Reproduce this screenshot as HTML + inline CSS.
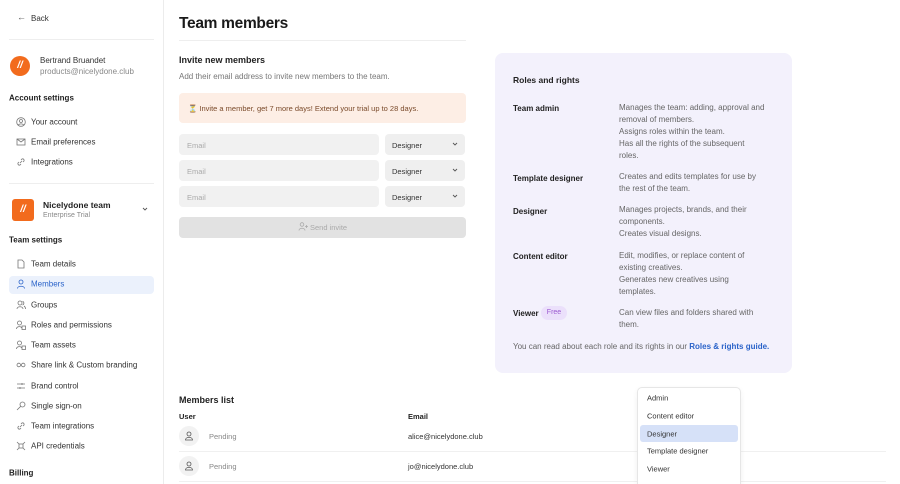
<!DOCTYPE html>
<html><head><style>
*{margin:0;padding:0;box-sizing:border-box}
html,body{width:900px;height:484px;overflow:hidden}
body{background:#fff;font-family:"Liberation Sans",sans-serif;color:#222;position:relative;font-size:8px}
.a{position:absolute;white-space:nowrap}
.side{position:absolute;left:0;top:0;width:164px;height:484px;border-right:1px solid #ececec}
.it{position:absolute;left:31px;font-size:8px;color:#333;transform:translateY(-50%)}
.ic{position:absolute;left:16px;width:10px;height:10px;transform:translateY(-50%)}
.h{font-weight:bold;font-size:8px;color:#222;transform:translateY(-50%)}
.inp{position:absolute;background:#f1f1f1;border-radius:4px;height:21px;font-size:7.5px;color:#aaa;padding:7px 8px}
.sel{position:absolute;background:#efefef;border-radius:4px;height:21px;font-size:7.5px;color:#333;padding:7px 7px;width:80px;left:385px}
.sel svg{position:absolute;right:7px;top:8px}
.r{position:absolute;font-size:8px;color:#666;line-height:12px;white-space:nowrap}
.rt{position:absolute;font-size:8px;font-weight:bold;color:#222;left:513px}
.dd{font-size:7.5px;color:#333;left:647px;transform:translateY(-50%)}
.av{position:absolute;left:179px;width:20px;height:20px;border-radius:50%;background:#f2f2f2}
</style></head><body>
<div class="side">
<div class="a" style="left:17px;top:12px;font-size:9px;color:#555">←</div>
<div class="a" style="left:31px;top:14px;font-size:8px;color:#333">Back</div>
<div class="a" style="left:9px;top:39px;width:145px;height:1px;background:#eee"></div>
<div class="a" style="left:10px;top:56px;width:20px;height:20px;border-radius:50%;background:#f26b1d;color:#fff;font-size:10px;font-weight:bold;font-style:italic;text-align:center;line-height:20px">//</div>
<div class="a" style="left:40px;top:56px;font-size:8px;color:#333">Bertrand Bruandet</div>
<div class="a" style="left:40px;top:67px;font-size:8px;color:#888">products@nicelydone.club</div>
<div class="a h" style="left:9px;top:98px">Account settings</div>
<svg class="ic" style="top:122px" viewBox="0 0 10 10" fill="none" stroke="#777" stroke-width=".8"><circle cx="5" cy="5" r="4.3"/><circle cx="5" cy="4" r="1.5"/><path d="M2.3 8c1-1.5 4.4-1.5 5.4 0"/></svg>
<div class="it" style="top:122px">Your account</div>
<svg class="ic" style="top:142px" viewBox="0 0 10 10" fill="none" stroke="#777" stroke-width=".8"><rect x="1" y="2" width="8" height="6"/><path d="M1 2l4 3 4-3"/></svg>
<div class="it" style="top:142px">Email preferences</div>
<svg class="ic" style="top:162px" viewBox="0 0 10 10" fill="none" stroke="#777" stroke-width=".8"><path d="M4 6l2-2M3 5L2 6a1.5 1.5 0 002 2l1-1M7 5l1-1a1.5 1.5 0 00-2-2L5 3"/></svg>
<div class="it" style="top:162px">Integrations</div>
<div class="a" style="left:9px;top:183px;width:145px;height:1px;background:#eee"></div>
<div class="a" style="left:12px;top:199px;width:22px;height:22px;border-radius:3px;background:#f26b1d;color:#fff;font-size:10px;font-weight:bold;font-style:italic;text-align:center;line-height:22px">//</div>
<div class="a" style="left:43px;top:200px;font-size:8.5px;font-weight:bold;color:#222">Nicelydone team</div>
<div class="a" style="left:43px;top:212px;font-size:7px;color:#888">Enterprise Trial</div>
<svg class="a" style="left:142px;top:207px" width="6" height="4" viewBox="0 0 6 4" fill="none" stroke="#555" stroke-width=".9"><path d="M1 1l2 2 2-2"/></svg>
<div class="a h" style="left:9px;top:240px">Team settings</div>
<div class="a" style="left:9px;top:276px;width:145px;height:18px;background:#ebf1fc;border-radius:4px"></div>
<svg class="ic" style="top:264px" viewBox="0 0 10 10" fill="none" stroke="#777" stroke-width=".8"><path d="M2 1h4l2 2v6H2z"/></svg><div class="it" style="top:264px">Team details</div>
<svg class="ic" style="top:284px" viewBox="0 0 10 10" fill="none" stroke="#2a63c9" stroke-width=".8"><circle cx="5" cy="3" r="2"/><path d="M1.5 9.5c0-3 7-3 7 0"/></svg><div class="it" style="top:284px;color:#2a63c9">Members</div>
<svg class="ic" style="top:305px" viewBox="0 0 10 10" fill="none" stroke="#777" stroke-width=".8"><circle cx="4" cy="3" r="2"/><path d="M1 9c0-3 6-3 6 0M6.5 1.2a2 2 0 010 3.8M8 6c1 .6 1.5 1.6 1.5 3"/></svg><div class="it" style="top:305px">Groups</div>
<svg class="ic" style="top:325px" viewBox="0 0 10 10" fill="none" stroke="#777" stroke-width=".8"><circle cx="3.5" cy="3" r="2"/><path d="M.5 9c0-3 5-3 5-1"/><rect x="6" y="6" width="3.5" height="3.5"/></svg><div class="it" style="top:325px">Roles and permissions</div>
<svg class="ic" style="top:345px" viewBox="0 0 10 10" fill="none" stroke="#777" stroke-width=".8"><circle cx="3.5" cy="3" r="2"/><path d="M.5 9c0-3 5-3 5-1"/><rect x="6" y="6" width="3.5" height="3.5"/></svg><div class="it" style="top:345px">Team assets</div>
<svg class="ic" style="top:365px" viewBox="0 0 10 10" fill="none" stroke="#777" stroke-width=".8"><circle cx="2.8" cy="5" r="1.8"/><circle cx="7.2" cy="5" r="1.8"/></svg><div class="it" style="top:365px">Share link &amp; Custom branding</div>
<svg class="ic" style="top:386px" viewBox="0 0 10 10" fill="none" stroke="#777" stroke-width=".8"><path d="M1 3h8M1 7h8M6 2v2M4 6v2"/></svg><div class="it" style="top:386px">Brand control</div>
<svg class="ic" style="top:406px" viewBox="0 0 10 10" fill="none" stroke="#777" stroke-width=".8"><circle cx="6.5" cy="3.5" r="2.5"/><path d="M4.7 5.3L1 9"/></svg><div class="it" style="top:406px">Single sign-on</div>
<svg class="ic" style="top:426px" viewBox="0 0 10 10" fill="none" stroke="#777" stroke-width=".8"><path d="M4 6l2-2M3 5L2 6a1.5 1.5 0 002 2l1-1M7 5l1-1a1.5 1.5 0 00-2-2L5 3"/></svg><div class="it" style="top:426px">Team integrations</div>
<svg class="ic" style="top:446px" viewBox="0 0 10 10" fill="none" stroke="#777" stroke-width=".8"><rect x="3" y="3" width="4" height="4"/><path d="M1 1l2 2M9 1L7 3M1 9l2-2M9 9L7 7"/></svg><div class="it" style="top:446px">API credentials</div>
<div class="a h" style="left:9px;top:473px">Billing</div>
</div>

<div class="a" style="left:179px;top:15px;font-size:15.5px;font-weight:bold;color:#1a1a1a;letter-spacing:-0.3px">Team members</div>
<div class="a" style="left:179px;top:40px;width:287px;height:1px;background:#eee"></div>
<div class="a" style="left:179px;top:55px;font-size:9px;font-weight:bold;color:#222">Invite new members</div>
<div class="a" style="left:179px;top:72px;font-size:8px;color:#777">Add their email address to invite new members to the team.</div>
<div class="a" style="left:179px;top:93px;width:287px;height:30px;background:#fdeee5;border-radius:4px"></div>
<div class="a" style="left:188px;top:104px;font-size:7.5px;color:#7a4a2a">⏳ Invite a member, get 7 more days! Extend your trial up to 28 days.</div>
<div class="inp" style="left:179px;top:134px;width:200px">Email</div><div class="sel" style="top:134px">Designer<svg width="6" height="4" viewBox="0 0 6 4" fill="none" stroke="#555" stroke-width=".9"><path d="M1 1l2 2 2-2"/></svg></div>
<div class="inp" style="left:179px;top:160px;width:200px">Email</div><div class="sel" style="top:160px">Designer<svg width="6" height="4" viewBox="0 0 6 4" fill="none" stroke="#555" stroke-width=".9"><path d="M1 1l2 2 2-2"/></svg></div>
<div class="inp" style="left:179px;top:186px;width:200px">Email</div><div class="sel" style="top:186px">Designer<svg width="6" height="4" viewBox="0 0 6 4" fill="none" stroke="#555" stroke-width=".9"><path d="M1 1l2 2 2-2"/></svg></div>
<div class="a" style="left:179px;top:217px;width:287px;height:21px;background:#e2e2e2;border-radius:4px;text-align:center;font-size:7.5px;color:#aaa;line-height:21px"><svg width="10" height="9" viewBox="0 0 10 9" fill="none" stroke="#aaa" stroke-width=".8" style="vertical-align:-1px"><circle cx="4" cy="2.5" r="1.8"/><path d="M1 8.5c0-3 6-3 6 0M8.5 3v3M7 4.5h3"/></svg> Send invite</div>

<div class="a" style="left:495px;top:53px;width:297px;height:320px;background:#f3f1fc;border-radius:8px"></div>
<div class="rt" style="top:75px;font-size:8.5px">Roles and rights</div>
<div class="rt" style="top:104px">Team admin</div>
<div class="r" style="left:619px;top:102px">Manages the team: adding, approval and<br>removal of members.<br>Assigns roles within the team.<br>Has all the rights of the subsequent<br>roles.</div>
<div class="rt" style="top:174px">Template designer</div>
<div class="r" style="left:619px;top:171px">Creates and edits templates for use by<br>the rest of the team.</div>
<div class="rt" style="top:207px">Designer</div>
<div class="r" style="left:619px;top:204px">Manages projects, brands, and their<br>components.<br>Creates visual designs.</div>
<div class="rt" style="top:252px">Content editor</div>
<div class="r" style="left:619px;top:250px">Edit, modifies, or replace content of<br>existing creatives.<br>Generates new creatives using<br>templates.</div>
<div class="rt" style="top:309px">Viewer</div>
<div class="a" style="left:541px;top:306px;width:26px;height:14px;border-radius:7px;background:#ebe0fb;color:#9b59d0;font-size:7px;text-align:center;line-height:14px">Free</div>
<div class="r" style="left:619px;top:307px">Can view files and folders shared with<br>them.</div>
<div class="r" style="left:513px;top:341px">You can read about each role and its rights in our <b style="color:#2a63c9">Roles &amp; rights guide.</b></div>

<div class="a" style="left:179px;top:395px;font-size:9px;font-weight:bold;color:#222">Members list</div>
<div class="a" style="left:179px;top:412px;font-size:7.5px;font-weight:bold;color:#222">User</div>
<div class="a" style="left:408px;top:412px;font-size:7.5px;font-weight:bold;color:#222">Email</div>
<div class="av" style="top:426px"><svg width="20" height="20" viewBox="0 0 20 20" fill="none" stroke="#555" stroke-width=".8"><circle cx="10" cy="8" r="2"/><path d="M6.5 14c0-3.5 7-3.5 7 0z"/></svg></div>
<div class="a" style="left:209px;top:432px;font-size:7.5px;color:#888">Pending</div>
<div class="a" style="left:408px;top:432px;font-size:7.5px;color:#333">alice@nicelydone.club</div>
<div class="a" style="left:179px;top:451px;width:707px;height:1px;background:#f0f0f0"></div>
<div class="av" style="top:456px"><svg width="20" height="20" viewBox="0 0 20 20" fill="none" stroke="#555" stroke-width=".8"><circle cx="10" cy="8" r="2"/><path d="M6.5 14c0-3.5 7-3.5 7 0z"/></svg></div>
<div class="a" style="left:209px;top:462px;font-size:7.5px;color:#888">Pending</div>
<div class="a" style="left:408px;top:462px;font-size:7.5px;color:#333">jo@nicelydone.club</div>
<div class="a" style="left:179px;top:481px;width:707px;height:1px;background:#f0f0f0"></div>

<div class="a" style="left:637px;top:387px;width:104px;height:97px;background:#fff;border:1px solid #e6e6e6;border-bottom:none;border-radius:5px 5px 0 0;box-shadow:0 2px 6px rgba(0,0,0,.06)"></div>
<div class="a" style="left:640px;top:425px;width:98px;height:17px;background:#d6e1f8;border-radius:3px"></div>
<div class="a dd" style="top:398px">Admin</div>
<div class="a dd" style="top:416px">Content editor</div>
<div class="a dd" style="top:434px">Designer</div>
<div class="a dd" style="top:451px">Template designer</div>
<div class="a dd" style="top:469px">Viewer</div>
</body></html>
